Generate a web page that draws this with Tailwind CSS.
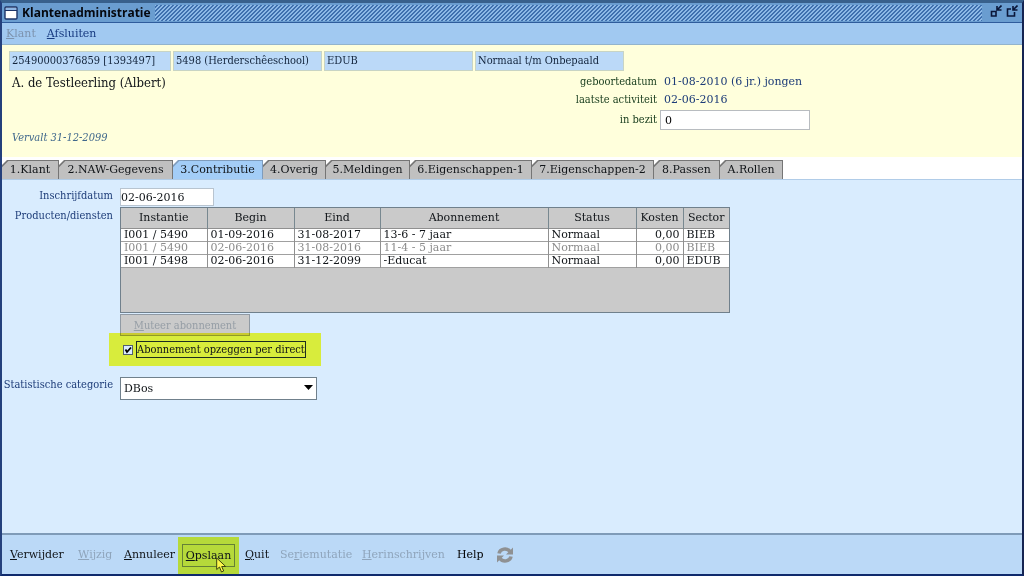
<!DOCTYPE html>
<html lang="nl">
<head>
<meta charset="utf-8">
<title>Klantenadministratie</title>
<script src="https://cdn.jsdelivr.net/npm/@tailwindcss/browser@4"></script>
</head>
<body class="flex min-h-screen flex-col border-x-2 border-t-3 border-b-2 border-t-[#38608c] border-r-[#152452] border-b-[#0f2a6c] border-l-[#24407c] bg-[#d9ecfe] font-['DejaVu_Serif',serif] text-[11px] leading-4 text-[#101418]">

<header class="flex h-5 shrink-0 items-center gap-1 border-b border-[#2f5c9c] bg-[#6a9dd0] pr-1 pl-[2px]">
  <svg class="size-[14px]" viewBox="0 0 14 14" aria-hidden="true"><rect x="1" y="1" width="12" height="12" rx="1" fill="#fff" stroke="#1c3468" stroke-width="1.4"/><path d="M2 2h10v2H2z" fill="#8fb6e4"/><path d="M1 4.5h12" stroke="#1c3468"/></svg>
  <h1 class="font-['Open_Sans',sans-serif] text-[12px] font-bold text-[#05080f]">Klantenadministratie</h1>
  <div class="h-4 grow bg-[linear-gradient(135deg,#8db9e6_12.5%,#3f70ae_12.5%_37.5%,#8db9e6_37.5%_62.5%,#3f70ae_62.5%_87.5%,#8db9e6_87.5%)] bg-size-[4px_4px]"></div>
  <button type="button" aria-label="Verkleinen" class="ml-1 -mt-1"><svg class="size-3" viewBox="0 0 12 12" fill="none" stroke="#0a1638" stroke-width="1.6"><path d="M1.500 6.500H6V11H1.500zM11.500 0.500L7.500 4.500M7 1v4h4.500"/></svg></button>
  <button type="button" aria-label="Venster herstellen" class="-mt-1"><svg class="size-3" viewBox="0 0 12 12" fill="none" stroke="#0a1638" stroke-width="1.600"><path d="M5 4H1.500v7h7V7M11.500 0.500L7.500 4.500M7 1v4h4.500"/></svg></button>
</header>

<nav class="flex h-[22px] shrink-0 items-center gap-[11px] border-b border-[#93b4cc] bg-[#a1c9f1] pl-1">
  <button type="button" disabled class="text-[#7d93ae]"><u>K</u>lant</button>
  <button type="button" class="text-[#173a80]"><u>A</u>fsluiten</button>
</nav>

<section class="h-28 shrink-0 bg-[#ffffdc] px-[7px] pt-[6px]">
  <div class="flex gap-[2px] font-['DejaVu_Serif_Condensed',serif] whitespace-nowrap text-[#12243c]">
    <div class="h-5 w-[162px] border border-[#c8d4c4] bg-[#bbd9f8] px-[2px] pt-px">25490000376859 [1393497]</div>
    <div class="h-5 w-[149px] border border-[#c8d4c4] bg-[#bbd9f8] px-[2px] pt-px">5498 (Herderschêeschool)</div>
    <div class="h-5 w-[149px] border border-[#c8d4c4] bg-[#bbd9f8] px-[2px] pt-px">EDUB</div>
    <div class="h-5 w-[149px] border border-[#c8d4c4] bg-[#bbd9f8] px-[2px] pt-px">Normaal t/m Onbepaald</div>
  </div>
  <div class="flex">
    <div class="flex w-[560px] flex-col justify-between pt-1 pl-[3px] font-['DejaVu_Serif_Condensed',serif]">
      <p class="text-[13px]">A. de Testleerling (Albert)</p>
      <p class="-mb-4 text-[#40688c] italic">Vervalt 31-12-2099</p>
    </div>
    <div class="grid grid-cols-[88px_150px] items-center gap-x-[3px] pt-[3px] text-[#1c4020]">
      <span class="h-[18px] text-right font-['DejaVu_Serif_Condensed',serif]">geboortedatum</span><span class="h-[18px] pl-1 whitespace-nowrap text-[#1d3c78]">01-08-2010 (6 jr.) jongen</span>
      <span class="h-[18px] text-right font-['DejaVu_Serif_Condensed',serif]">laatste activiteit</span><span class="h-[18px] pl-1 text-[#1d3c78]">02-06-2016</span>
      <label for="bezit" class="text-right font-['DejaVu_Serif_Condensed',serif]">in bezit</label><input id="bezit" value="0" class="h-5 w-[150px] border border-[#b8bcc0] bg-white px-1 text-black">
    </div>
  </div>
</section>

<div role="tablist" class="flex h-[23px] shrink-0 items-end border-b border-[#b0cce8] bg-white">
  <button role="tab" type="button" class="h-[19px] w-[57px] border-t border-r border-[#757575] bg-[linear-gradient(135deg,#757575_4px,#c0c0c0_5px)] [clip-path:polygon(5px_0,100%_0,100%_100%,0_100%,0_5px)]">1.Klant</button>
  <button role="tab" type="button" class="h-[19px] w-[114px] border-t border-r border-[#757575] bg-[linear-gradient(135deg,#757575_4px,#c0c0c0_5px)] [clip-path:polygon(5px_0,100%_0,100%_100%,0_100%,0_5px)]">2.NAW-Gegevens</button>
  <button role="tab" type="button" aria-selected="true" class="h-[19px] w-[90px] border-t border-r border-[#7f9cbc] bg-[linear-gradient(135deg,#7f9cbc_4px,#a3cdf7_5px)] [clip-path:polygon(5px_0,100%_0,100%_100%,0_100%,0_5px)]">3.Contributie</button>
  <button role="tab" type="button" class="h-[19px] w-[63px] border-t border-r border-[#757575] bg-[linear-gradient(135deg,#757575_4px,#c0c0c0_5px)] [clip-path:polygon(5px_0,100%_0,100%_100%,0_100%,0_5px)]">4.Overig</button>
  <button role="tab" type="button" class="h-[19px] w-[84px] border-t border-r border-[#757575] bg-[linear-gradient(135deg,#757575_4px,#c0c0c0_5px)] [clip-path:polygon(5px_0,100%_0,100%_100%,0_100%,0_5px)]">5.Meldingen</button>
  <button role="tab" type="button" class="h-[19px] w-[122px] border-t border-r border-[#757575] bg-[linear-gradient(135deg,#757575_4px,#c0c0c0_5px)] [clip-path:polygon(5px_0,100%_0,100%_100%,0_100%,0_5px)]">6.Eigenschappen-1</button>
  <button role="tab" type="button" class="h-[19px] w-[122px] border-t border-r border-[#757575] bg-[linear-gradient(135deg,#757575_4px,#c0c0c0_5px)] [clip-path:polygon(5px_0,100%_0,100%_100%,0_100%,0_5px)]">7.Eigenschappen-2</button>
  <button role="tab" type="button" class="h-[19px] w-[66px] border-t border-r border-[#757575] bg-[linear-gradient(135deg,#757575_4px,#c0c0c0_5px)] [clip-path:polygon(5px_0,100%_0,100%_100%,0_100%,0_5px)]">8.Passen</button>
  <button role="tab" type="button" class="h-[19px] w-[63px] border-t border-r border-[#757575] bg-[linear-gradient(135deg,#757575_4px,#c0c0c0_5px)] [clip-path:polygon(5px_0,100%_0,100%_100%,0_100%,0_5px)]">A.Rollen</button>
</div>

<main class="grid grow grid-cols-[111px_1fr] content-start gap-x-[7px] bg-[#d9ecfe] pt-2">
  <label for="datum" class="text-right font-['DejaVu_Serif_Condensed',serif] text-[#1d3c78]">Inschrijfdatum</label>
  <input id="datum" value="02-06-2016" class="h-[18px] w-[94px] border border-[#b8c4d0] bg-white">

  <span id="producten" class="mt-[2px] text-right font-['DejaVu_Serif_Condensed',serif] text-[#1d3c78]">Producten/diensten</span>
  <div class="mt-px h-[106px] w-[610px] border border-[#70808c] bg-[#cacaca]">
    <table aria-labelledby="producten" class="w-full table-fixed border-collapse">
      <colgroup><col class="w-[86px]"><col class="w-[87px]"><col class="w-[86px]"><col class="w-[168px]"><col class="w-[88px]"><col class="w-[47px]"><col></colgroup>
      <thead>
        <tr class="h-5 divide-x divide-[#788890] border-b border-[#909090]"><th class="p-0 font-normal">Instantie</th><th class="p-0 font-normal">Begin</th><th class="p-0 font-normal">Eind</th><th class="p-0 font-normal">Abonnement</th><th class="p-0 font-normal">Status</th><th class="p-0 font-normal">Kosten</th><th class="p-0 font-normal">Sector</th></tr>
      </thead>
      <tbody class="divide-y divide-[#a0a0a0] border-b border-[#a0a0a0] bg-white leading-3">
        <tr class="divide-x divide-[#909090]"><td class="py-0 pl-[3px]">I001 / 5490</td><td class="py-0 pl-[3px]">01-09-2016</td><td class="py-0 pl-[3px]">31-08-2017</td><td class="py-0 pl-[3px]">13-6 - 7 jaar</td><td class="py-0 pl-[3px]">Normaal</td><td class="py-0 pr-[3px] text-right">0,00</td><td class="py-0 pl-[3px]">BIEB</td></tr>
        <tr class="divide-x divide-[#909090] text-[#8c8c8c]"><td class="py-0 pl-[3px]">I001 / 5490</td><td class="py-0 pl-[3px]">02-06-2016</td><td class="py-0 pl-[3px]">31-08-2016</td><td class="py-0 pl-[3px]">11-4 - 5 jaar</td><td class="py-0 pl-[3px]">Normaal</td><td class="py-0 pr-[3px] text-right">0,00</td><td class="py-0 pl-[3px]">BIEB</td></tr>
        <tr class="divide-x divide-[#909090]"><td class="py-0 pl-[3px]">I001 / 5498</td><td class="py-0 pl-[3px]">02-06-2016</td><td class="py-0 pl-[3px]">31-12-2099</td><td class="py-0 pl-[3px]">-Educat</td><td class="py-0 pl-[3px]">Normaal</td><td class="py-0 pr-[3px] text-right">0,00</td><td class="py-0 pl-[3px]">EDUB</td></tr>
      </tbody>
    </table>
  </div>

  <div class="col-start-2 mt-px font-['DejaVu_Serif_Condensed',serif]">
    <button type="button" disabled class="block h-[22px] w-[130px] border border-[#909aa4] bg-[#cacaca] pt-px text-[#969ea6]"><u>M</u>uteer abonnement</button>
    <div class="-mt-[3px] -ml-[11px] flex h-[33px] w-[212px] items-center gap-[3px] bg-[#feff3c] pl-[14px] mix-blend-multiply">
      <span class="grid size-[10px] place-items-center">
        <input id="opzeggen" type="checkbox" checked class="peer col-start-1 row-start-1 size-[10px] appearance-none border border-[#606870] bg-white">
        <svg class="pointer-events-none invisible col-start-1 row-start-1 size-2 peer-checked:visible" viewBox="0 0 8 8" fill="none" stroke="#000" stroke-width="1.800"><path d="M1.500 3.500l1.500 2.500L7 1.500"/></svg>
      </span>
      <label for="opzeggen" class="h-[17px] border border-[#203020] leading-[15px] whitespace-nowrap">Abonnement opzeggen per direct</label>
    </div>
  </div>

  <label for="categorie" class="mt-[11px] text-right font-['DejaVu_Serif_Condensed',serif] whitespace-nowrap text-[#1d3c78]">Statistische categorie</label>
  <div class="relative mt-[11px] w-[197px]">
    <select id="categorie" class="block h-[23px] w-full appearance-none border border-[#70808c] bg-white px-[3px]"><option>DBos</option></select>
    <svg class="pointer-events-none absolute top-2 right-1 h-[5px] w-[9px]" viewBox="0 0 9 5" aria-hidden="true"><path d="M0 0h9L4.500 5z"/></svg>
  </div>
</main>

<footer class="flex h-[41px] shrink-0 items-center border-t-2 border-[#7f9bb8] bg-[#bbd9f7] pl-2">
  <button type="button" class="w-[68px] pt-px text-left"><u>V</u>erwijder</button>
  <button type="button" disabled class="w-[46px] pt-px text-left text-[#8fa5bc]"><u>W</u>ijzig</button>
  <button type="button" class="w-[54px] pt-px text-left"><u>A</u>nnuleer</button>
  <div class="relative flex h-[37px] w-[61px] items-center justify-center self-end bg-[#f8ff3c] mix-blend-multiply">
    <button type="button" class="h-[23px] w-[53px] border border-[#8a9838]"><u>O</u>pslaan</button>
  </div>
  <button type="button" class="ml-[6px] w-[35px] pt-px text-left"><u>Q</u>uit</button>
  <button type="button" disabled class="w-[82px] pt-px text-left text-[#8fa5bc]">Se<u>r</u>iemutatie</button>
  <button type="button" disabled class="w-[95px] pt-px text-left text-[#8fa5bc]"><u>H</u>erinschrijven</button>
  <button type="button" class="w-10 pt-px text-left text-black">Help</button>
  <button type="button" aria-label="Vernieuwen"><svg class="size-4" viewBox="0 0 16 16" fill="none" stroke="#8f9193" stroke-width="3.5"><path d="M2 6.500c1-5 8-6 11-2M14 9.500c-1 5-8 6-11 2"/><path d="M16 0.500v7H9zM0 15.500v-7h7z" fill="#8f9193" stroke="none"/></svg></button>
</footer>

<svg class="pointer-events-none absolute top-[557px] left-[216px] h-4 w-[11px]" viewBox="0 0 11 16" aria-hidden="true"><path d="M.700 1v11.500l2.800-2.500 2 5 2.200-1-2-4.500h4z" fill="#fdf84a" stroke="#3c4410"/></svg>
</body>
</html>
